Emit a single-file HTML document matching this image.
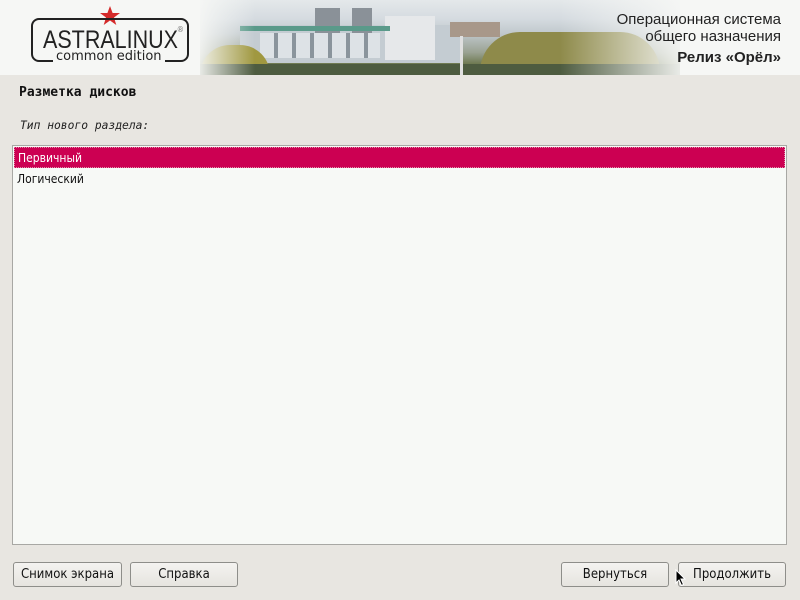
<!DOCTYPE html>
<html><head><meta charset="utf-8"><style>
*{margin:0;padding:0;box-sizing:border-box}
body{width:800px;height:600px;background:#e8e6e1;position:relative;overflow:hidden;font-family:"DejaVu Sans Condensed","DejaVu Sans",sans-serif;}
#hdr{position:absolute;left:0;top:0;width:800px;height:75px;background:#f6f7f5;overflow:hidden}
#photo{position:absolute;left:200px;top:0;width:480px;height:75px;
background:linear-gradient(180deg,#e4e8ea 0%,#d5dbe0 25%,#c0c8cc 45%,#9aa292 70%,#6f7a52 85%,#4d5a3a 100%);}
#photo .b{position:absolute}
#fadeL{position:absolute;left:195px;top:0;width:60px;height:75px;background:linear-gradient(90deg,#f6f7f5,rgba(246,247,245,0))}
#fadeR{position:absolute;left:560px;top:0;width:130px;height:75px;background:linear-gradient(90deg,rgba(246,247,245,0),#f6f7f5)}
#logo{position:absolute;left:31px;top:18px;width:158px;height:44px;border:2px solid #222;border-radius:8px}
#logo .t{position:absolute;left:10px;top:8px;font-family:"Liberation Sans",sans-serif;font-size:25px;line-height:25px;color:#222;transform:scaleX(0.86);transform-origin:0 0;white-space:nowrap}
#logo .c{position:absolute;left:20px;top:30px;background:#f6f7f5;padding:0 3px;font-family:"DejaVu Sans",sans-serif;font-size:13px;line-height:14px;color:#222;white-space:nowrap}
#rt{position:absolute;right:19px;top:11px;text-align:right;font-family:"Liberation Sans",sans-serif;font-size:15px;color:#222;line-height:17px}
.mono{font-family:"DejaVu Sans Mono",monospace}
#title{position:absolute;left:19px;top:85px;font-size:13px;font-weight:bold;color:#111}
#lbl{position:absolute;left:20px;top:119px;font-size:11.3px;font-style:italic;color:#222}
#list{position:absolute;left:12px;top:145px;width:775px;height:400px;background:#f7f9f6;border:1px solid #a8a8a4}
.it{position:absolute;left:1px;width:771px;height:21px;font-size:12px;line-height:20px;padding-left:3px;color:#111}
.sel{background:#cc0052;color:#fff;border:1px dotted #e08aa8}
.btn{position:absolute;top:562px;height:25px;border:1px solid #8e8e8a;border-radius:3px;background:linear-gradient(#f4f3f0,#e6e4df);font-size:13px;line-height:23px;text-align:center;color:#111}
</style></head><body>
<div id="hdr">
 <div id="photo">
  <div class="b" style="left:40px;top:25px;width:220px;height:38px;background:#c4ccd2"></div>
  <div class="b" style="left:115px;top:8px;width:25px;height:25px;background:#8a9198"></div>
  <div class="b" style="left:152px;top:8px;width:20px;height:25px;background:#8a9198"></div>
  <div class="b" style="left:185px;top:16px;width:50px;height:44px;background:#e6e8ea"></div>
  <div class="b" style="left:40px;top:26px;width:150px;height:5px;background:#5a9a8a"></div>
  <div class="b" style="left:60px;top:33px;width:120px;height:25px;background:repeating-linear-gradient(90deg,#dde2e6 0 14px,#8a949c 14px 18px)"></div>
  <div class="b" style="left:250px;top:22px;width:50px;height:15px;background:#a8988a"></div>
  <div class="b" style="left:0;top:45px;width:70px;height:30px;background:#a09840;border-radius:30px 30px 0 0"></div>
  <div class="b" style="left:280px;top:32px;width:180px;height:43px;background:#8e8a4a;border-radius:40px 40px 0 0"></div>
  <div class="b" style="left:0;top:64px;width:480px;height:11px;background:#4e5c40"></div>
  <div class="b" style="left:260px;top:36px;width:3px;height:39px;background:#e0e0e0"></div>
 </div>
 <div id="fadeL"></div><div id="fadeR"></div>
 <svg style="position:absolute;left:99px;top:6px" width="22" height="20" viewBox="0 0 22 20"><polygon points="11,0 13.6,7 21,7 15,11.5 17.3,19 11,14.5 4.7,19 7,11.5 1,7 8.4,7" fill="#d42a2a"/></svg>
 <div id="logo"><div class="t">ASTRALINUX</div><div class="c">common edition</div><div style="position:absolute;right:3px;top:5px;font-size:8px;color:#777">®</div></div>
 <div id="rt">Операционная система<br>общего назначения<br><b style="line-height:25px">Релиз «Орёл»</b></div>
</div>
<div id="title" class="mono">Разметка дисков</div>
<div id="lbl" class="mono">Тип нового раздела:</div>
<div id="list">
 <div class="it sel" style="top:1px">Первичный</div>
 <div class="it" style="top:23px">Логический</div>
</div>
<div class="btn" style="left:13px;width:109px">Снимок экрана</div>
<div class="btn" style="left:130px;width:108px">Справка</div>
<div class="btn" style="left:561px;width:108px">Вернуться</div>
<div class="btn" style="left:678px;width:108px">Продолжить</div>
<svg style="position:absolute;left:675px;top:569px" width="12" height="18" viewBox="0 0 12 18"><path d="M1 1 L1 14 L4 11 L6.5 16.5 L8.5 15.5 L6 10 L10 10 Z" fill="#000" stroke="#fff" stroke-width="1"/></svg>
</body></html>
